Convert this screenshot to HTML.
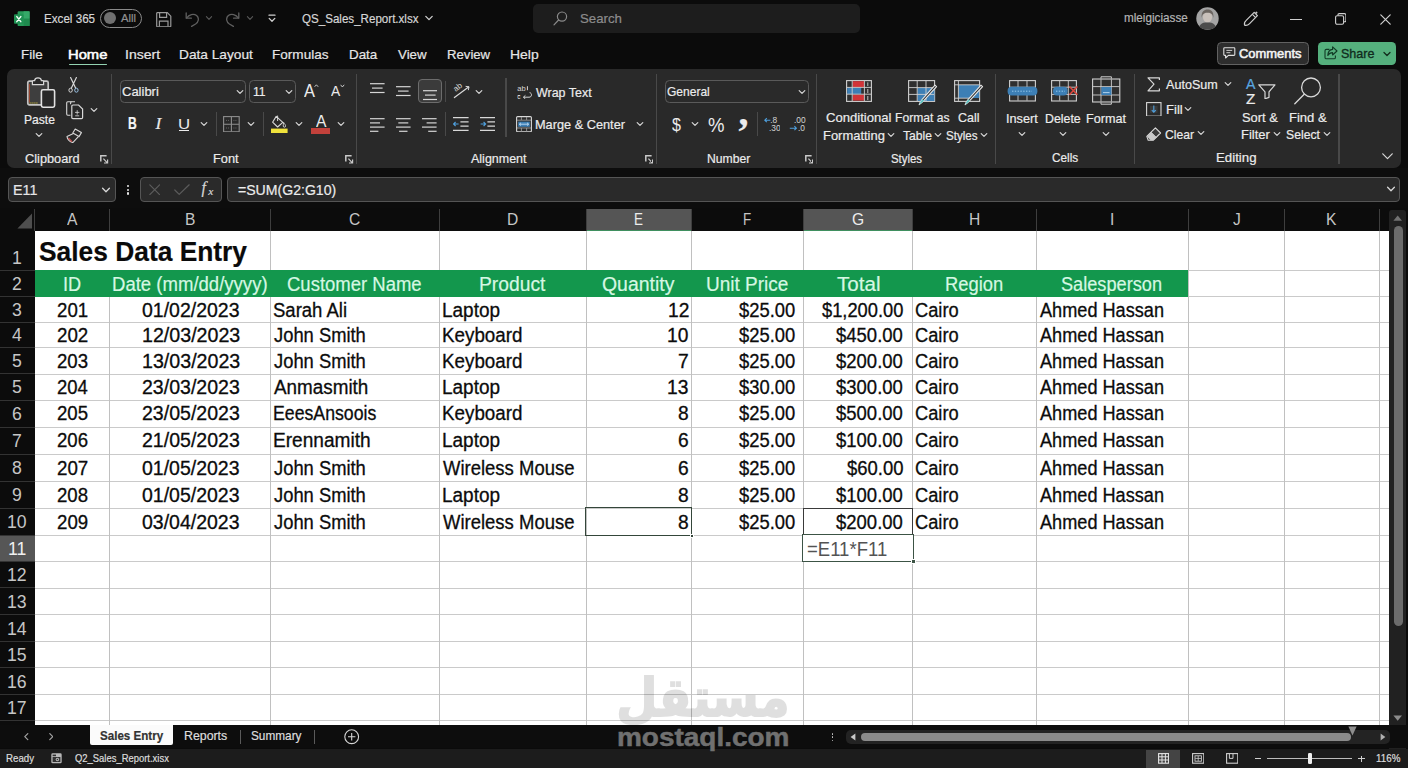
<!DOCTYPE html>
<html lang="en"><head><meta charset="utf-8"><title>QS_Sales_Report.xlsx - Excel</title>
<style>
html,body{margin:0;padding:0;}
body{width:1408px;height:768px;overflow:hidden;background:#0b0b0b;position:relative;font-family:"Liberation Sans",sans-serif;}
.r{position:absolute;box-sizing:border-box;display:block;}
.t{position:absolute;white-space:pre;line-height:1;display:block;font-family:"Liberation Sans",sans-serif;-webkit-text-stroke:0.2px currentColor;}
.ar{font-family:"DejaVu Sans","Liberation Sans",sans-serif;}
</style></head><body>
<div class="r" style="left:0px;top:0px;width:1408px;height:70px;background:#0b0b0b;"></div>
<svg class="r" style="left:14px;top:10.8px;" width="16" height="15.6" viewBox="0 0 16 15.6" fill="none"><rect x="3.6" y="0.3" width="12" height="15" rx="1.2" fill="#279a59"/><rect x="9.6" y="0.3" width="6" height="7.4" fill="#35a868"/><rect x="9.6" y="7.7" width="6" height="7.6" fill="#1f8a4e"/><rect x="0" y="3.2" width="9.6" height="9.6" rx="1" fill="#1f9153"/><path d="M2.8 5.6 L6.8 10.6 M6.8 5.6 L2.8 10.6" stroke="#f4fff8" stroke-width="1.5" stroke-linecap="round"/></svg>
<span class="t" style="left:44.17px;top:11.96px;font-size:13.4px;color:#d6d6d6;transform:scaleX(0.8686);transform-origin:left center;">Excel 365</span>
<div class="r" style="left:100.3px;top:9px;width:41.9px;height:18.5px;background:transparent;border:1px solid #8a8a8a;border-radius:10px;"></div>
<div class="r" style="left:104px;top:12.3px;width:12px;height:12px;background:#707070;border-radius:50%;"></div>
<span class="t" style="left:121.40px;top:13.03px;font-size:10.6px;color:#909090;transform:scaleX(1.0590);transform-origin:left center;">Alll</span>
<svg class="r" style="left:156px;top:11.5px;" width="15.5" height="15.5" viewBox="0 0 15.5 15.5" fill="none"><path d="M1.2 0.7 H11.3 L14.8 4.2 V14 Q14.8 14.8 14 14.8 H1.5 Q0.7 14.8 0.7 14 V1.2 Q0.7 0.7 1.2 0.7 Z" stroke="#9a9a9a" stroke-width="1.2"/><path d="M3.6 0.9 V5.4 H10.6 V0.9" stroke="#9a9a9a" stroke-width="1.2"/><path d="M3.4 14.6 V9.2 H12 V14.6" stroke="#9a9a9a" stroke-width="1.2"/></svg>
<svg class="r" style="left:185px;top:12px;" width="15" height="15" viewBox="0 0 15 15" fill="none"><path d="M1.2 1 V6.2 H6.4" stroke="#5f5f5f" stroke-width="1.3" stroke-linecap="round" stroke-linejoin="round"/><path d="M1.6 6 C4 2.5 8.6 1.2 11.6 3.6 C14.6 6.2 13.4 10 10.6 12 L6.6 14.4" stroke="#5f5f5f" stroke-width="1.3" stroke-linecap="round"/></svg>
<svg class="r" style="left:203.4px;top:14px;" width="12" height="8" viewBox="0 0 12 8" fill="none"><path d="M3.4 2.7 L6 5.3 L8.6 2.7" stroke="#5a5a5a" stroke-width="1.1" stroke-linecap="round" stroke-linejoin="round"/></svg>
<svg class="r" style="left:225px;top:12px;" width="15" height="15" viewBox="0 0 15 15" fill="none"><path d="M13.8 1 V6.2 H8.6" stroke="#5f5f5f" stroke-width="1.3" stroke-linecap="round" stroke-linejoin="round"/><path d="M13.4 6 C11 2.5 6.4 1.2 3.4 3.6 C0.4 6.2 1.6 10 4.4 12 L8.4 14.4" stroke="#5f5f5f" stroke-width="1.3" stroke-linecap="round"/></svg>
<svg class="r" style="left:243.5px;top:14px;" width="12" height="8" viewBox="0 0 12 8" fill="none"><path d="M3.4 2.7 L6 5.3 L8.6 2.7" stroke="#5a5a5a" stroke-width="1.1" stroke-linecap="round" stroke-linejoin="round"/></svg>
<svg class="r" style="left:268px;top:14px;" width="8" height="9" viewBox="0 0 8 9" fill="none"><path d="M1 1.2 H7" stroke="#d0d0d0" stroke-width="1.3" stroke-linecap="round"/><path d="M1.2 4.4 L4 7.2 L6.8 4.4" stroke="#d0d0d0" stroke-width="1.3" stroke-linecap="round" stroke-linejoin="round"/></svg>
<span class="t" style="left:302.18px;top:12.13px;font-size:13.2px;color:#d6d6d6;transform:scaleX(0.8783);transform-origin:left center;">QS_Sales_Report.xlsx</span>
<svg class="r" style="left:423px;top:14.3px;" width="12" height="8" viewBox="0 0 12 8" fill="none"><path d="M2.8 2.4 L6 5.6 L9.2 2.4" stroke="#d0d0d0" stroke-width="1.3" stroke-linecap="round" stroke-linejoin="round"/></svg>
<div class="r" style="left:533px;top:4px;width:327px;height:28.5px;background:#1d1d1d;border-radius:5px;"></div>
<svg class="r" style="left:553px;top:11px;" width="15" height="15" viewBox="0 0 15 15" fill="none"><circle cx="9" cy="5.6" r="4.6" stroke="#8a8a8a" stroke-width="1.2"/><path d="M5.6 9 L1 13.8" stroke="#8a8a8a" stroke-width="1.2" stroke-linecap="round"/></svg>
<span class="t" style="left:579.90px;top:12.03px;font-size:13.2px;color:#8c8c8c;transform:scaleX(1.0043);transform-origin:left center;">Search</span>
<span class="t" style="left:1123.84px;top:11.93px;font-size:12.6px;color:#b4b4b4;transform:scaleX(0.9298);transform-origin:left center;">mleigiciasse</span>
<svg class="r" style="left:1195.5px;top:6.5px;" width="23" height="23" viewBox="0 0 23 23" fill="none"><circle cx="11.5" cy="11.5" r="11.2" fill="#a4a4a4"/><ellipse cx="11.5" cy="10" rx="4.6" ry="5.6" fill="#c9c1bb"/><path d="M5.6 11 C5 4 9 2.4 11.5 2.6 C14.4 2.4 18 4 17.4 11 C17 8 15.6 5.6 11.5 5.8 C7.6 5.6 6 8 5.6 11 Z" fill="#6b6560"/><path d="M3.2 19.6 C5 15.4 8.4 15 11.5 15.6 C14.6 15 18 15.4 19.8 19.6 C17.6 22 14.6 22.6 11.5 22.6 C8.4 22.6 5.4 22 3.2 19.6 Z" fill="#4c4c4c"/></svg>
<svg class="r" style="left:1243px;top:11px;" width="16" height="16" viewBox="0 0 16 16" fill="none"><path d="M11.2 1.4 L14.4 4.6 L6.6 12.6 C5.4 13.8 3 14.6 1.6 14.2 C1.2 12.8 2 10.4 3.2 9.4 Z" stroke="#cfcfcf" stroke-width="1.2" stroke-linejoin="round"/><path d="M9.4 3.4 L12.4 6.4" stroke="#cfcfcf" stroke-width="1.1"/><path d="M13.4 0.6 v2.2 M12.3 1.7 h2.2" stroke="#cfcfcf" stroke-width="0.9"/></svg>
<div class="r" style="left:1290px;top:18.6px;width:11.5px;height:1.2px;background:#cfcfcf;"></div>
<svg class="r" style="left:1334.6px;top:13px;" width="11.6" height="12" viewBox="0 0 11.6 12" fill="none"><rect x="0.6" y="2.8" width="8" height="8.4" rx="1.5" stroke="#cfcfcf" stroke-width="1.1"/><path d="M3 2.4 V1.8 Q3 0.6 4.2 0.6 H9.4 Q10.9 0.6 10.9 2.1 V7.6 Q10.9 8.8 9.7 8.8 H9" stroke="#cfcfcf" stroke-width="1.1"/></svg>
<svg class="r" style="left:1379.6px;top:13.6px;" width="11" height="11" viewBox="0 0 11 11" fill="none"><path d="M0.8 0.8 L10.2 10.2 M10.2 0.8 L0.8 10.2" stroke="#cfcfcf" stroke-width="1.2" stroke-linecap="round"/></svg>
<span class="t" style="left:20.72px;top:47.59px;font-size:13.6px;color:#e6e6e6;transform:scaleX(0.9903);transform-origin:left center;">File</span>
<span class="t" style="left:67.82px;top:47.59px;font-size:13.6px;color:#ffffff;transform:scaleX(1.0856);transform-origin:left center;-webkit-text-stroke:0.55px #fff;">Home</span>
<span class="t" style="left:124.84px;top:47.59px;font-size:13.6px;color:#e6e6e6;transform:scaleX(1.0334);transform-origin:left center;">Insert</span>
<span class="t" style="left:179.20px;top:47.59px;font-size:13.6px;color:#e6e6e6;transform:scaleX(1.0077);transform-origin:left center;">Data Layout</span>
<span class="t" style="left:272.31px;top:47.59px;font-size:13.6px;color:#e6e6e6;transform:scaleX(0.9973);transform-origin:left center;">Formulas</span>
<span class="t" style="left:348.93px;top:47.59px;font-size:13.6px;color:#e6e6e6;transform:scaleX(0.9852);transform-origin:left center;">Data</span>
<span class="t" style="left:397.73px;top:47.59px;font-size:13.6px;color:#e6e6e6;transform:scaleX(0.9804);transform-origin:left center;">View</span>
<span class="t" style="left:446.95px;top:47.59px;font-size:13.6px;color:#e6e6e6;transform:scaleX(0.9674);transform-origin:left center;">Review</span>
<span class="t" style="left:510.08px;top:47.59px;font-size:13.6px;color:#e6e6e6;transform:scaleX(1.0260);transform-origin:left center;">Help</span>
<div class="r" style="left:69px;top:63.7px;width:37.6px;height:1.5px;background:#93d2b1;border-radius:1px;"></div>
<div class="r" style="left:1216.6px;top:42.4px;width:92.6px;height:22.4px;background:#2d2d2d;border:1px solid #626262;border-radius:4.5px;"></div>
<svg class="r" style="left:1223px;top:47px;" width="13" height="12" viewBox="0 0 13 12" fill="none"><path d="M1.6 0.8 H11 Q11.8 0.8 11.8 1.6 V7.6 Q11.8 8.4 11 8.4 H5.4 L2.6 11 V8.4 H1.6 Q0.8 8.4 0.8 7.6 V1.6 Q0.8 0.8 1.6 0.8 Z" stroke="#e0e0e0" stroke-width="1.1" stroke-linejoin="round"/><path d="M3.4 3.4 H9.2 M3.4 5.7 H7.4" stroke="#e0e0e0" stroke-width="0.9"/></svg>
<span class="t" style="left:1239.35px;top:47.16px;font-size:13.4px;color:#f4f4f4;transform:scaleX(0.9662);transform-origin:left center;-webkit-text-stroke:0.55px #f4f4f4;">Comments</span>
<div class="r" style="left:1318.1px;top:42.2px;width:78.2px;height:22.6px;background:#55b07d;border-radius:4.5px;"></div>
<svg class="r" style="left:1324px;top:46px;" width="14" height="14" viewBox="0 0 14 14" fill="none"><path d="M5.4 3.4 H2.4 Q1 3.4 1 4.8 V11.4 Q1 12.8 2.4 12.8 H10 Q11.4 12.8 11.4 11.4 V9.6" stroke="#113a25" stroke-width="1.1"/><path d="M8.6 0.9 L13 5 L8.6 9 V6.6 C6.6 6.6 5 7.2 3.8 9.4 C4 6 5.6 3.6 8.6 3.4 Z" stroke="#113a25" stroke-width="1.1" stroke-linejoin="round"/></svg>
<span class="t" style="left:1341.24px;top:46.99px;font-size:13.6px;color:#122c1d;transform:scaleX(0.9223);transform-origin:left center;-webkit-text-stroke:0.35px #0d2a1b;">Share</span>
<svg class="r" style="left:1380.7px;top:49.9px;" width="12" height="8" viewBox="0 0 12 8" fill="none"><path d="M3 2.5 L6 5.5 L9 2.5" stroke="#122c1d" stroke-width="1.3" stroke-linecap="round" stroke-linejoin="round"/></svg>
<div class="r" style="left:7.3px;top:69px;width:1393.4px;height:99px;background:#292929;border-radius:7px;"></div>
<svg class="r" style="left:26px;top:77px;" width="30" height="32" viewBox="0 0 30 32" fill="none"><rect x="1.8" y="4.2" width="20.4" height="23.6" rx="1.6" fill="#3e3e3e" stroke="#c4c4c4" stroke-width="1.7"/><path d="M6.4 7.6 V4.6 Q6.4 3.6 7.4 3.6 H8.6 C9 0 15 0 15.4 3.6 H16.6 Q17.6 3.6 17.6 4.6 V7.6 Z" stroke="#d6d6d6" stroke-width="1.2" fill="#292929"/><path d="M3.6 26 H12" stroke="#e8d53a" stroke-width="1.2" stroke-dasharray="1 1"/><path d="M3.4 7 V25.4" stroke="#a0452c" stroke-width="1" /><rect x="15.4" y="12.8" width="13.2" height="17.4" rx="1.6" fill="#292929" stroke="#e2e2e2" stroke-width="1.6"/></svg>
<span class="t" style="left:23.83px;top:112.73px;font-size:13.2px;color:#ececec;transform:scaleX(0.9166);transform-origin:left center;">Paste</span>
<svg class="r" style="left:32.9px;top:131px;" width="12" height="8" viewBox="0 0 12 8" fill="none"><path d="M3.2 2.6 L6 5.4 L8.8 2.6" stroke="#d8d8d8" stroke-width="1.2" stroke-linecap="round" stroke-linejoin="round"/></svg>
<svg class="r" style="left:68.4px;top:77px;" width="11" height="16.4" viewBox="0 0 11 16.4" fill="none"><path d="M2.6 0.6 L7.6 11 M8.4 0.6 L3.4 11" stroke="#d8d8d8" stroke-width="1.2" stroke-linecap="round"/><ellipse cx="2.6" cy="13.2" rx="1.7" ry="2" stroke="#d8d8d8" stroke-width="1"/><ellipse cx="8.4" cy="13.2" rx="1.7" ry="2" stroke="#9cc3e6" stroke-width="1"/></svg>
<svg class="r" style="left:65.5px;top:101px;" width="18" height="18.5" viewBox="0 0 18 18.5" fill="none"><path d="M4.6 3.2 V1.8 Q4.6 0.7 5.7 0.7 H9 " stroke="#d8d8d8" stroke-width="1.1"/><path d="M4.4 14.2 H1.8 Q0.7 14.2 0.7 13.1 V1.8 Q0.7 0.7 1.8 0.7 H5.6" stroke="#d8d8d8" stroke-width="1.1"/><path d="M7 4 H12.6 L16.6 8 V16.4 Q16.6 17.6 15.4 17.6 H7 Q5.8 17.6 5.8 16.4 V5.2 Q5.8 4 7 4 Z" stroke="#d8d8d8" stroke-width="1.2" fill="#292929"/><path d="M9 11.4 H13.4 M11.2 9.2 V13.6 M9.2 14.8 H13.2" stroke="#d8d8d8" stroke-width="0.8"/></svg>
<svg class="r" style="left:87.8px;top:106.4px;" width="12" height="8" viewBox="0 0 12 8" fill="none"><path d="M3.2 2.6 L6 5.4 L8.8 2.6" stroke="#d8d8d8" stroke-width="1.2" stroke-linecap="round" stroke-linejoin="round"/></svg>
<svg class="r" style="left:66px;top:127.5px;" width="17" height="15.5" viewBox="0 0 17 15.5" fill="none"><path d="M9.2 1 L15.4 4.6 L13 8.6 L6.8 5 Z" stroke="#d8d8d8" stroke-width="1.1" stroke-linejoin="round"/><path d="M7.4 5.6 L1 8.6 C1.4 11 3.6 13.6 6.8 14.6 L12.4 8.6" stroke="#d8d8d8" stroke-width="1.1" stroke-linejoin="round"/><path d="M2.4 10 L6 13.8" stroke="#c0504d" stroke-width="1.4"/></svg>
<span class="t" style="left:24.96px;top:151.63px;font-size:13.2px;color:#ececec;transform:scaleX(0.9677);transform-origin:left center;">Clipboard</span>
<svg class="r" style="left:100px;top:154.6px;" width="8.6" height="9.2" viewBox="0 0 8.6 9.2" fill="none"><path d="M0.8 6.6 V0.8 H6.6" stroke="#c9c9c9" stroke-width="1.5"/><path d="M3.4 3.6 L7.4 7.8 M7.6 4.4 V8 H4" stroke="#c9c9c9" stroke-width="1.2"/></svg>
<div class="r" style="left:111.0px;top:74px;width:1.4px;height:89.5px;background:#494949;"></div>
<div class="r" style="left:119.5px;top:79.6px;width:126px;height:23.2px;background:#2a2a2a;border:1.2px solid #5a5a5a;border-radius:4.5px;"></div>
<span class="t" style="left:122.05px;top:84.89px;font-size:13.6px;color:#ececec;transform:scaleX(0.9560);transform-origin:left center;">Calibri</span>
<svg class="r" style="left:233.6px;top:88px;" width="12" height="8" viewBox="0 0 12 8" fill="none"><path d="M3.2 2.6 L6 5.4 L8.8 2.6" stroke="#d8d8d8" stroke-width="1.2" stroke-linecap="round" stroke-linejoin="round"/></svg>
<div class="r" style="left:249.2px;top:79.6px;width:46.6px;height:23.2px;background:#2a2a2a;border:1.2px solid #5a5a5a;border-radius:4.5px;"></div>
<span class="t" style="left:252.89px;top:84.69px;font-size:13.6px;color:#ececec;transform:scaleX(0.8920);transform-origin:left center;">11</span>
<svg class="r" style="left:283.4px;top:88px;" width="12" height="8" viewBox="0 0 12 8" fill="none"><path d="M3.2 2.6 L6 5.4 L8.8 2.6" stroke="#d8d8d8" stroke-width="1.2" stroke-linecap="round" stroke-linejoin="round"/></svg>
<span class="t" style="left:304.10px;top:80.82px;font-size:19px;color:#ececec;transform:scaleX(0.8627);transform-origin:left center;-webkit-text-stroke:0;">A</span>
<svg class="r" style="left:314.4px;top:84.4px;" width="5" height="5" viewBox="0 0 5 5" fill="none"><path d="M0.6 2.8 L2.4 0.8 L4.2 2.8" stroke="#d8d8d8" stroke-width="0.9"/></svg>
<span class="t" style="left:330.80px;top:84.46px;font-size:14.7px;color:#ececec;transform:scaleX(0.9411);transform-origin:left center;-webkit-text-stroke:0;">A</span>
<svg class="r" style="left:339.9px;top:84px;" width="5" height="5" viewBox="0 0 5 5" fill="none"><path d="M0.6 0.8 L2.4 3 L4.2 0.8" stroke="#d8d8d8" stroke-width="0.9"/></svg>
<span class="t" style="left:127.91px;top:115.66px;font-size:16px;color:#f6f6f6;font-weight:700;transform:scaleX(0.7582);transform-origin:left center;">B</span>
<span class="t" style="left:155.4px;top:114.6px;font-size:17.4px;color:#e8e8e8;font-family:'Liberation Serif',serif;font-style:italic;">I</span>
<span class="t" style="left:177.94px;top:115.96px;font-size:15.4px;color:#ececec;transform:scaleX(1.0936);transform-origin:left center;-webkit-text-stroke:0;">U</span>
<div class="r" style="left:179px;top:130.4px;width:10px;height:1.1px;background:#ececec;"></div>
<svg class="r" style="left:197.8px;top:120.4px;" width="12" height="8" viewBox="0 0 12 8" fill="none"><path d="M3.2 2.6 L6 5.4 L8.8 2.6" stroke="#d8d8d8" stroke-width="1.2" stroke-linecap="round" stroke-linejoin="round"/></svg>
<div class="r" style="left:215.9px;top:112.4px;width:1.4px;height:23.599999999999994px;background:#494949;"></div>
<svg class="r" style="left:223px;top:116px;" width="17" height="16.4" viewBox="0 0 17 16.4" fill="none"><rect x="0.6" y="0.6" width="15.6" height="15.2" stroke="#8e8e8e" stroke-width="1.1"/><path d="M8.4 1 V15.6 M1 8.2 H16" stroke="#8e8e8e" stroke-width="1.1"/><path d="M3 4.4 h3.4 M10.4 4.4 h3.4 M3 12 h3.4 M10.4 12 h3.4" stroke="#6a6a6a" stroke-width="0.9" stroke-dasharray="1 1"/></svg>
<svg class="r" style="left:245.3px;top:120.4px;" width="12" height="8" viewBox="0 0 12 8" fill="none"><path d="M3.2 2.6 L6 5.4 L8.8 2.6" stroke="#d8d8d8" stroke-width="1.2" stroke-linecap="round" stroke-linejoin="round"/></svg>
<div class="r" style="left:262.7px;top:112.4px;width:1.4px;height:23.599999999999994px;background:#494949;"></div>
<svg class="r" style="left:271px;top:115px;" width="17" height="18.4" viewBox="0 0 17 18.4" fill="none"><path d="M5.2 1.4 L11.8 7.4 L6.6 12 L1.6 7.2 Z" stroke="#d8d8d8" stroke-width="1.1" stroke-linejoin="round"/><path d="M6.6 0.6 V6" stroke="#d8d8d8" stroke-width="1"/><path d="M12.6 7.4 C13.6 9 14.6 10 14.6 11 C14.6 12.6 12.2 12.6 12.2 11 C12.2 10 12.6 9 12.6 7.4 Z" stroke="#d8d8d8" stroke-width="0.9"/><rect x="0" y="13.6" width="16.6" height="4.5" fill="#efe23c"/></svg>
<svg class="r" style="left:292.6px;top:120.4px;" width="12" height="8" viewBox="0 0 12 8" fill="none"><path d="M3.2 2.6 L6 5.4 L8.8 2.6" stroke="#d8d8d8" stroke-width="1.2" stroke-linecap="round" stroke-linejoin="round"/></svg>
<span class="t" style="left:315.90px;top:113.31px;font-size:17px;color:#ececec;transform:scaleX(0.9199);transform-origin:left center;-webkit-text-stroke:0;">A</span>
<div class="r" style="left:311.4px;top:128.2px;width:18.2px;height:6px;background:#c2413b;"></div>
<svg class="r" style="left:334.6px;top:120.4px;" width="12" height="8" viewBox="0 0 12 8" fill="none"><path d="M3.2 2.6 L6 5.4 L8.8 2.6" stroke="#d8d8d8" stroke-width="1.2" stroke-linecap="round" stroke-linejoin="round"/></svg>
<span class="t" style="left:212.78px;top:151.63px;font-size:13.2px;color:#ececec;transform:scaleX(0.9692);transform-origin:left center;">Font</span>
<svg class="r" style="left:345.2px;top:154.6px;" width="8.6" height="9.2" viewBox="0 0 8.6 9.2" fill="none"><path d="M0.8 6.6 V0.8 H6.6" stroke="#c9c9c9" stroke-width="1.5"/><path d="M3.4 3.6 L7.4 7.8 M7.6 4.4 V8 H4" stroke="#c9c9c9" stroke-width="1.2"/></svg>
<div class="r" style="left:355.6px;top:74px;width:1.4px;height:89.5px;background:#494949;"></div>
<svg class="r" style="left:370px;top:83px;" width="14.6" height="14.200000000000001" viewBox="0 0 14.6 14.200000000000001" fill="none"><path d="M0.0 0.7 h14.6" stroke="#d6d6d6" stroke-width="1.2"/><path d="M2.0 5.1 h10.6" stroke="#d6d6d6" stroke-width="1.2"/><path d="M0.0 9.5 h14.6" stroke="#d6d6d6" stroke-width="1.2"/></svg>
<svg class="r" style="left:396px;top:85.6px;" width="14.6" height="14.200000000000001" viewBox="0 0 14.6 14.200000000000001" fill="none"><path d="M0.0 0.7 h14.6" stroke="#d6d6d6" stroke-width="1.2"/><path d="M2.0 5.1 h10.6" stroke="#d6d6d6" stroke-width="1.2"/><path d="M0.0 9.5 h14.6" stroke="#d6d6d6" stroke-width="1.2"/></svg>
<div class="r" style="left:417.8px;top:79.2px;width:23.8px;height:24.2px;background:#3b3b3b;border:1px solid #6c6c6c;border-radius:4px;"></div>
<svg class="r" style="left:422.6px;top:90.2px;" width="14.6" height="14.200000000000001" viewBox="0 0 14.6 14.200000000000001" fill="none"><path d="M0.0 0.7 h14.6" stroke="#d6d6d6" stroke-width="1.2"/><path d="M2.0 5.1 h10.6" stroke="#d6d6d6" stroke-width="1.2"/><path d="M0.0 9.5 h14.6" stroke="#d6d6d6" stroke-width="1.2"/></svg>
<div class="r" style="left:444.7px;top:80.5px;width:1.4px;height:21.700000000000003px;background:#494949;"></div>
<svg class="r" style="left:453px;top:83px;" width="17.4" height="16" viewBox="0 0 17.4 16" fill="none"><path d="M1.4 14.6 L15.6 4" stroke="#d8d8d8" stroke-width="1.2" stroke-linecap="round"/><path d="M13 3.4 L16 3.8 L15.4 6.8" stroke="#d8d8d8" stroke-width="1" stroke-linecap="round"/><text x="1.2" y="7.6" font-size="8" fill="#d8d8d8" font-family="Liberation Sans,sans-serif" transform="rotate(-38 4 6)">ab</text></svg>
<svg class="r" style="left:472.6px;top:88px;" width="12" height="8" viewBox="0 0 12 8" fill="none"><path d="M3.2 2.6 L6 5.4 L8.8 2.6" stroke="#d8d8d8" stroke-width="1.2" stroke-linecap="round" stroke-linejoin="round"/></svg>
<div class="r" style="left:505.3px;top:78px;width:1.4px;height:58.69999999999999px;background:#494949;"></div>
<svg class="r" style="left:517px;top:84.6px;" width="15" height="14.4" viewBox="0 0 15 14.4" fill="none"><text x="0.2" y="6.4" font-size="7.6" fill="#d8d8d8" font-family="Liberation Sans,sans-serif">ab</text><path d="M10.4 1.2 V5.2" stroke="#d8d8d8" stroke-width="1"/><path d="M0.8 10.6 H3 M12.6 7.6 C15.4 8 15 12.4 12 12.2 H6.6" stroke="#d8d8d8" stroke-width="1"/><path d="M8.4 10.4 L6.4 12.2 L8.4 14" stroke="#d8d8d8" stroke-width="1"/><text x="0.2" y="13.6" font-size="6.6" fill="#d8d8d8" font-family="Liberation Sans,sans-serif">c</text></svg>
<span class="t" style="left:536.04px;top:85.93px;font-size:13.2px;color:#ececec;transform:scaleX(0.9448);transform-origin:left center;">Wrap Text</span>
<svg class="r" style="left:370px;top:117.6px;" width="14.6" height="17.8" viewBox="0 0 14.6 17.8" fill="none"><path d="M0.0 0.7 h14.6" stroke="#d6d6d6" stroke-width="1.2"/><path d="M0.0 4.9 h10" stroke="#d6d6d6" stroke-width="1.2"/><path d="M0.0 9.1 h14.6" stroke="#d6d6d6" stroke-width="1.2"/><path d="M0.0 13.3 h8.4" stroke="#d6d6d6" stroke-width="1.2"/></svg>
<svg class="r" style="left:396px;top:117.6px;" width="14.6" height="17.8" viewBox="0 0 14.6 17.8" fill="none"><path d="M0.0 0.7 h14.6" stroke="#d6d6d6" stroke-width="1.2"/><path d="M2.3 4.9 h10" stroke="#d6d6d6" stroke-width="1.2"/><path d="M0.0 9.1 h14.6" stroke="#d6d6d6" stroke-width="1.2"/><path d="M3.1 13.3 h8.4" stroke="#d6d6d6" stroke-width="1.2"/></svg>
<svg class="r" style="left:422.4px;top:117.6px;" width="14.6" height="17.8" viewBox="0 0 14.6 17.8" fill="none"><path d="M0.0 0.7 h14.6" stroke="#d6d6d6" stroke-width="1.2"/><path d="M4.6 4.9 h10" stroke="#d6d6d6" stroke-width="1.2"/><path d="M0.0 9.1 h14.6" stroke="#d6d6d6" stroke-width="1.2"/><path d="M6.2 13.3 h8.4" stroke="#d6d6d6" stroke-width="1.2"/></svg>
<div class="r" style="left:444.7px;top:112.4px;width:1.4px;height:23.599999999999994px;background:#494949;"></div>
<svg class="r" style="left:453.4px;top:117.4px;" width="15.6" height="14" viewBox="0 0 15.6 14" fill="none"><path d="M0 0.7 H15.6 M7.4 4.9 H15.6 M7.4 9.1 H15.6 M0 13.3 H15.6" stroke="#d8d8d8" stroke-width="1.2"/><path d="M5.6 7 H0.6 M2.6 5 L0.6 7 L2.6 9" stroke="#4f9fdc" stroke-width="1.1"/></svg>
<svg class="r" style="left:479.8px;top:117.4px;" width="15.6" height="14" viewBox="0 0 15.6 14" fill="none"><path d="M0 0.7 H15.6 M7.4 4.9 H15.6 M7.4 9.1 H15.6 M0 13.3 H15.6" stroke="#d8d8d8" stroke-width="1.2"/><path d="M0.6 7 H5.6 M3.6 5 L5.6 7 L3.6 9" stroke="#4f9fdc" stroke-width="1.1"/></svg>
<svg class="r" style="left:515.6px;top:116px;" width="16" height="16.4" viewBox="0 0 16 16.4" fill="none"><rect x="0.6" y="0.6" width="14.8" height="15.2" rx="1" stroke="#d8d8d8" stroke-width="1.1"/><path d="M1 4.2 H15 M1 12 H15 M5.4 1 V4 M10.6 1 V4 M5.4 12 V15.6 M10.6 12 V15.6" stroke="#9c9c9c" stroke-width="0.9"/><rect x="2.2" y="5.6" width="11.6" height="5.2" fill="#3d7fb5"/><path d="M3.4 8.2 H12.6 M5 6.8 L3.4 8.2 L5 9.6 M11 6.8 L12.6 8.2 L11 9.6" stroke="#cfe6f7" stroke-width="0.8"/></svg>
<span class="t" style="left:535.08px;top:117.83px;font-size:13.2px;color:#ececec;transform:scaleX(0.9666);transform-origin:left center;">Marge &amp; Center</span>
<svg class="r" style="left:634.2px;top:120.4px;" width="12" height="8" viewBox="0 0 12 8" fill="none"><path d="M3.2 2.6 L6 5.4 L8.8 2.6" stroke="#d8d8d8" stroke-width="1.2" stroke-linecap="round" stroke-linejoin="round"/></svg>
<span class="t" style="left:470.90px;top:151.63px;font-size:13.2px;color:#ececec;transform:scaleX(0.9470);transform-origin:left center;">Alignment</span>
<svg class="r" style="left:644.8px;top:154.6px;" width="8.6" height="9.2" viewBox="0 0 8.6 9.2" fill="none"><path d="M0.8 6.6 V0.8 H6.6" stroke="#c9c9c9" stroke-width="1.5"/><path d="M3.4 3.6 L7.4 7.8 M7.6 4.4 V8 H4" stroke="#c9c9c9" stroke-width="1.2"/></svg>
<div class="r" style="left:655.5999999999999px;top:74px;width:1.4px;height:89.5px;background:#494949;"></div>
<div class="r" style="left:665.2px;top:79.6px;width:143.4px;height:23.2px;background:#2a2a2a;border:1.2px solid #5a5a5a;border-radius:4.5px;"></div>
<span class="t" style="left:667.30px;top:84.89px;font-size:13.6px;color:#ececec;transform:scaleX(0.8849);transform-origin:left center;">General</span>
<svg class="r" style="left:795.6px;top:88px;" width="12" height="8" viewBox="0 0 12 8" fill="none"><path d="M3.2 2.6 L6 5.4 L8.8 2.6" stroke="#d8d8d8" stroke-width="1.2" stroke-linecap="round" stroke-linejoin="round"/></svg>
<span class="t" style="left:671.54px;top:115.32px;font-size:19px;color:#ececec;transform:scaleX(0.8441);transform-origin:left center;-webkit-text-stroke:0;">$</span>
<svg class="r" style="left:688.7px;top:120.4px;" width="12" height="8" viewBox="0 0 12 8" fill="none"><path d="M3.2 2.6 L6 5.4 L8.8 2.6" stroke="#d8d8d8" stroke-width="1.2" stroke-linecap="round" stroke-linejoin="round"/></svg>
<span class="t" style="left:708.45px;top:114.73px;font-size:20.4px;color:#ececec;transform:scaleX(0.9087);transform-origin:left center;-webkit-text-stroke:0;">%</span>
<span class="t" style="left:738.6px;top:91.8px;font-size:40px;font-weight:700;color:#ececec;font-family:'Liberation Serif',serif;">,</span>
<div class="r" style="left:756.6999999999999px;top:112.4px;width:1.4px;height:23.599999999999994px;background:#494949;"></div>
<svg class="r" style="left:763.6px;top:116.4px;" width="16.4" height="16" viewBox="0 0 16.4 16" fill="none"><text x="6.2" y="7" font-size="8.4" fill="#d4d4d4" font-family="Liberation Sans,sans-serif">.8</text><text x="5" y="15.4" font-size="8.4" fill="#d4d4d4" font-family="Liberation Sans,sans-serif">.30</text><path d="M6.4 4.2 H0.8 M2.8 2.2 L0.8 4.2 L2.8 6.2" stroke="#4f9fdc" stroke-width="1.1"/></svg>
<svg class="r" style="left:789.2px;top:116.4px;" width="16.4" height="16" viewBox="0 0 16.4 16" fill="none"><text x="5" y="7" font-size="8.4" fill="#d4d4d4" font-family="Liberation Sans,sans-serif">.00</text><text x="9" y="15.4" font-size="8.4" fill="#d4d4d4" font-family="Liberation Sans,sans-serif">.0</text><path d="M0.8 12.2 H7.4 M5.4 10.2 L7.4 12.2 L5.4 14.2" stroke="#4f9fdc" stroke-width="1.1"/></svg>
<span class="t" style="left:706.52px;top:151.63px;font-size:13.2px;color:#ececec;transform:scaleX(0.9240);transform-origin:left center;">Number</span>
<svg class="r" style="left:804.7px;top:154.6px;" width="8.6" height="9.2" viewBox="0 0 8.6 9.2" fill="none"><path d="M0.8 6.6 V0.8 H6.6" stroke="#c9c9c9" stroke-width="1.5"/><path d="M3.4 3.6 L7.4 7.8 M7.6 4.4 V8 H4" stroke="#c9c9c9" stroke-width="1.2"/></svg>
<div class="r" style="left:815.5px;top:74px;width:1.4px;height:89.5px;background:#494949;"></div>
<svg class="r" style="left:846.4px;top:80.4px;" width="26" height="22" viewBox="0 0 26 22" fill="none"><rect x="0.6" y="0.6" width="24.8" height="20.8" stroke="#d0d0d0" stroke-width="1.1" fill="#2f2f2f"/><rect x="6.6" y="1.2" width="11.4" height="6" fill="#d13438"/><rect x="1.2" y="7.6" width="14" height="6.4" fill="#3d7fb5"/><rect x="6.6" y="14.6" width="11.4" height="6" fill="#d13438"/><path d="M6.2 1 V21 M18.4 1 V21 M1 7.4 H25 M1 14.2 H25" stroke="#d0d0d0" stroke-width="0.9"/><path d="M21.8 2.4 V6 M21.8 9 V13 M21.8 16 V20" stroke="#d0d0d0" stroke-width="0.9"/></svg>
<span class="t" style="left:825.75px;top:111.43px;font-size:13.2px;color:#ececec;transform:scaleX(0.9910);transform-origin:left center;">Conditional</span>
<span class="t" style="left:822.86px;top:128.63px;font-size:13.2px;color:#ececec;transform:scaleX(0.9823);transform-origin:left center;">Formatting</span>
<svg class="r" style="left:885.1px;top:131px;" width="12" height="8" viewBox="0 0 12 8" fill="none"><path d="M3.2 2.6 L6 5.4 L8.8 2.6" stroke="#d8d8d8" stroke-width="1.2" stroke-linecap="round" stroke-linejoin="round"/></svg>
<svg class="r" style="left:907.6px;top:80.4px;" width="30.4" height="26" viewBox="0 0 30.4 26" fill="none"><rect x="0.6" y="0.6" width="26" height="20.8" stroke="#d0d0d0" stroke-width="1.1" fill="#2f2f2f"/><rect x="9.4" y="8" width="17" height="13" fill="#3d7fb5"/><path d="M9.2 1 V21 M18 1 V21 M1 7.6 H26 M1 14.4 H26" stroke="#d0d0d0" stroke-width="0.9"/><path d="M28.6 6.6 L16 20.4 C14.6 22 13 23.4 11.2 24.6 C12 22.6 13 21 14.4 19.2 L27 5.2 Z" fill="#2f2f2f" stroke="#e6e6e6" stroke-width="1.1" stroke-linejoin="round"/><path d="M11.2 24.6 C12 22.6 13 21 14.4 19.2 L16 20.4 C14.6 22 13 23.4 11.2 24.6 Z" fill="#59c3c3"/></svg>
<span class="t" style="left:895.03px;top:111.43px;font-size:13.2px;color:#ececec;transform:scaleX(0.9191);transform-origin:left center;">Format as</span>
<span class="t" style="left:902.86px;top:128.63px;font-size:13.2px;color:#ececec;transform:scaleX(0.9189);transform-origin:left center;">Table</span>
<svg class="r" style="left:931.7px;top:131px;" width="12" height="8" viewBox="0 0 12 8" fill="none"><path d="M3.2 2.6 L6 5.4 L8.8 2.6" stroke="#d8d8d8" stroke-width="1.2" stroke-linecap="round" stroke-linejoin="round"/></svg>
<svg class="r" style="left:953.6px;top:80.4px;" width="30.4" height="26" viewBox="0 0 30.4 26" fill="none"><rect x="0.6" y="0.6" width="25" height="20.8" stroke="#d0d0d0" stroke-width="1.1" fill="#2f2f2f"/><rect x="4.6" y="5" width="20.6" height="13" fill="#3d7fb5"/><path d="M4.4 1 V21 M1 4.8 H25.4 M1 18.2 H18" stroke="#d0d0d0" stroke-width="0.9"/><path d="M28.6 6.6 L16 20.4 C14.6 22 13 23.4 11.2 24.6 C12 22.6 13 21 14.4 19.2 L27 5.2 Z" fill="#2f2f2f" stroke="#e6e6e6" stroke-width="1.1" stroke-linejoin="round"/><path d="M11.2 24.6 C12 22.6 13 21 14.4 19.2 L16 20.4 C14.6 22 13 23.4 11.2 24.6 Z" fill="#59c3c3"/></svg>
<span class="t" style="left:957.98px;top:111.43px;font-size:13.2px;color:#ececec;transform:scaleX(0.9440);transform-origin:left center;">Call</span>
<span class="t" style="left:946.08px;top:128.63px;font-size:13.2px;color:#ececec;transform:scaleX(0.8793);transform-origin:left center;">Styles</span>
<svg class="r" style="left:978.2px;top:131px;" width="12" height="8" viewBox="0 0 12 8" fill="none"><path d="M3.2 2.6 L6 5.4 L8.8 2.6" stroke="#d8d8d8" stroke-width="1.2" stroke-linecap="round" stroke-linejoin="round"/></svg>
<span class="t" style="left:891.09px;top:151.63px;font-size:13.2px;color:#ececec;transform:scaleX(0.8650);transform-origin:left center;">Styles</span>
<div class="r" style="left:995.0999999999999px;top:74px;width:1.4px;height:89.5px;background:#494949;"></div>
<svg class="r" style="left:1009px;top:80.4px;overflow:visible;" width="27" height="21.6" viewBox="0 0 27 21.6" fill="none"><rect x="0.6" y="0.6" width="25.8" height="20.400000000000002" stroke="#d0d0d0" stroke-width="1.1" fill="#2f2f2f"/><path d="M9.0 1 V20.6 M18.0 1 V20.6 M1 7.2 H26 M1 14.4 H26" stroke="#d0d0d0" stroke-width="0.9"/><rect x="-1.4" y="6.8" width="29.8" height="8.6" rx="4" fill="#3d7fb5"/><path d="M3 11.2 h20" stroke="#9fd0f0" stroke-width="0.9" stroke-dasharray="1.4 1.4"/></svg>
<span class="t" style="left:1005.75px;top:111.63px;font-size:13.2px;color:#ececec;transform:scaleX(0.9639);transform-origin:left center;">Insert</span>
<svg class="r" style="left:1015.8px;top:130.4px;" width="12" height="8" viewBox="0 0 12 8" fill="none"><path d="M3.2 2.6 L6 5.4 L8.8 2.6" stroke="#d8d8d8" stroke-width="1.2" stroke-linecap="round" stroke-linejoin="round"/></svg>
<svg class="r" style="left:1051px;top:80.4px;overflow:visible;" width="26" height="21.6" viewBox="0 0 26 21.6" fill="none"><rect x="0.6" y="0.6" width="24.8" height="20.400000000000002" stroke="#d0d0d0" stroke-width="1.1" fill="#2f2f2f"/><path d="M8.7 1 V20.6 M17.3 1 V20.6 M1 7.2 H25 M1 14.4 H25" stroke="#d0d0d0" stroke-width="0.9"/><rect x="2" y="6.8" width="14.6" height="8.6" rx="4" fill="#3d7fb5"/><path d="M5 11.2 h9" stroke="#9fd0f0" stroke-width="0.9" stroke-dasharray="1.4 1.4"/><path d="M18.4 6.6 L26.4 14.8 M26.4 6.6 L18.4 14.8" stroke="#e0483e" stroke-width="1.5"/></svg>
<span class="t" style="left:1045.41px;top:111.63px;font-size:13.2px;color:#ececec;transform:scaleX(0.9370);transform-origin:left center;">Delete</span>
<svg class="r" style="left:1057.3px;top:130.4px;" width="12" height="8" viewBox="0 0 12 8" fill="none"><path d="M3.2 2.6 L6 5.4 L8.8 2.6" stroke="#d8d8d8" stroke-width="1.2" stroke-linecap="round" stroke-linejoin="round"/></svg>
<svg class="r" style="left:1092.4px;top:76px;" width="28.4" height="29" viewBox="0 0 28.4 29" fill="none"><path d="M9 2.6 V0.8 H19.4 V2.6" stroke="#d0d0d0" stroke-width="1"/><path d="M9 26.4 V28.2 H19.4 V26.4" stroke="#d0d0d0" stroke-width="1"/><rect x="0.6" y="3" width="27.2" height="23" stroke="#d0d0d0" stroke-width="1.1" fill="#2f2f2f"/><path d="M9 3.4 V25.6 M19.4 3.4 V25.6 M1 10.6 H27.4 M1 19 H27.4" stroke="#d0d0d0" stroke-width="0.9"/><rect x="9.4" y="11" width="10" height="8" fill="#3d7fb5"/><path d="M11 16.6 h6.6" stroke="#cfe6f7" stroke-width="0.8"/></svg>
<span class="t" style="left:1086.09px;top:111.63px;font-size:13.2px;color:#ececec;transform:scaleX(0.9568);transform-origin:left center;">Format</span>
<svg class="r" style="left:1100.4px;top:130.4px;" width="12" height="8" viewBox="0 0 12 8" fill="none"><path d="M3.2 2.6 L6 5.4 L8.8 2.6" stroke="#d8d8d8" stroke-width="1.2" stroke-linecap="round" stroke-linejoin="round"/></svg>
<span class="t" style="left:1051.81px;top:151.43px;font-size:13.2px;color:#ececec;transform:scaleX(0.8921);transform-origin:left center;">Cells</span>
<div class="r" style="left:1133.8999999999999px;top:74px;width:1.4px;height:89.5px;background:#494949;"></div>
<svg class="r" style="left:1147.4px;top:77px;" width="13.4" height="14.6" viewBox="0 0 13.4 14.6" fill="none"><path d="M12.4 3 V0.8 H1 L7 7.2 L1 13.8 H12.4 V11.6" stroke="#d8d8d8" stroke-width="1.2" stroke-linejoin="round"/></svg>
<span class="t" style="left:1166.10px;top:77.93px;font-size:13.2px;color:#ececec;transform:scaleX(0.9540);transform-origin:left center;">AutoSum</span>
<svg class="r" style="left:1222.1px;top:80.3px;" width="12" height="8" viewBox="0 0 12 8" fill="none"><path d="M3.2 2.6 L6 5.4 L8.8 2.6" stroke="#d8d8d8" stroke-width="1.2" stroke-linecap="round" stroke-linejoin="round"/></svg>
<svg class="r" style="left:1146px;top:101.6px;" width="15.6" height="14.8" viewBox="0 0 15.6 14.8" fill="none"><rect x="0.6" y="0.6" width="14.4" height="13.6" stroke="#d8d8d8" stroke-width="1.1"/><rect x="4" y="4" width="7.6" height="6.8" fill="#3a3a3a"/><path d="M7.8 3.6 V10 M5.8 8.2 L7.8 10.2 L9.8 8.2" stroke="#4f9fdc" stroke-width="1.1"/></svg>
<span class="t" style="left:1165.65px;top:102.83px;font-size:13.2px;color:#ececec;transform:scaleX(0.9922);transform-origin:left center;">Fill</span>
<svg class="r" style="left:1182.3px;top:105px;" width="12" height="8" viewBox="0 0 12 8" fill="none"><path d="M3.2 2.6 L6 5.4 L8.8 2.6" stroke="#d8d8d8" stroke-width="1.2" stroke-linecap="round" stroke-linejoin="round"/></svg>
<svg class="r" style="left:1146.4px;top:126.6px;" width="15.4" height="14.4" viewBox="0 0 15.4 14.4" fill="none"><path d="M9.4 0.8 L14.6 6 L7.4 13.2 L2.2 13.2 L0.8 9.4 Z" stroke="#d8d8d8" stroke-width="1.1" stroke-linejoin="round" fill="#3a3a3a"/><path d="M5 5.2 L10.2 10.4" stroke="#d8d8d8" stroke-width="1"/><path d="M1 9.6 L4.6 13.2 L7.4 13.2 L10.2 10.4 L5 5.2 Z" fill="#c9c9c9"/></svg>
<span class="t" style="left:1165.49px;top:127.53px;font-size:13.2px;color:#ececec;transform:scaleX(0.9208);transform-origin:left center;">Clear</span>
<svg class="r" style="left:1194.8px;top:129.3px;" width="12" height="8" viewBox="0 0 12 8" fill="none"><path d="M3.2 2.6 L6 5.4 L8.8 2.6" stroke="#d8d8d8" stroke-width="1.2" stroke-linecap="round" stroke-linejoin="round"/></svg>
<span class="t" style="left:1246.00px;top:77.01px;font-size:14.4px;color:#5aa7e0;transform:scaleX(0.9816);transform-origin:left center;">A</span>
<span class="t" style="left:1246.14px;top:91.75px;font-size:14px;color:#ececec;transform:scaleX(1.0909);transform-origin:left center;">Z</span>
<svg class="r" style="left:1258px;top:83.6px;" width="18" height="15.6" viewBox="0 0 18 15.6" fill="none"><path d="M0.8 0.8 H17 L11 7.8 V13.4 L7 14.8 V7.8 Z" stroke="#d8d8d8" stroke-width="1.2" stroke-linejoin="round"/></svg>
<span class="t" style="left:1242.42px;top:111.23px;font-size:13.2px;color:#ececec;transform:scaleX(0.9766);transform-origin:left center;">Sort &amp;</span>
<span class="t" style="left:1241.36px;top:128.13px;font-size:13.2px;color:#ececec;transform:scaleX(0.9840);transform-origin:left center;">Filter</span>
<svg class="r" style="left:1270.5px;top:130.4px;" width="12" height="8" viewBox="0 0 12 8" fill="none"><path d="M3.2 2.6 L6 5.4 L8.8 2.6" stroke="#d8d8d8" stroke-width="1.2" stroke-linecap="round" stroke-linejoin="round"/></svg>
<svg class="r" style="left:1294px;top:77px;" width="28" height="28" viewBox="0 0 28 28" fill="none"><circle cx="17" cy="10.4" r="9.4" stroke="#d8d8d8" stroke-width="1.3"/><path d="M10.2 17.2 L0.8 26.8" stroke="#d8d8d8" stroke-width="1.3" stroke-linecap="round"/></svg>
<span class="t" style="left:1289.46px;top:111.23px;font-size:13.2px;color:#ececec;transform:scaleX(0.9893);transform-origin:left center;">Find &amp;</span>
<span class="t" style="left:1286.35px;top:128.13px;font-size:13.2px;color:#ececec;transform:scaleX(0.9258);transform-origin:left center;">Select</span>
<svg class="r" style="left:1321px;top:130.4px;" width="12" height="8" viewBox="0 0 12 8" fill="none"><path d="M3.2 2.6 L6 5.4 L8.8 2.6" stroke="#d8d8d8" stroke-width="1.2" stroke-linecap="round" stroke-linejoin="round"/></svg>
<span class="t" style="left:1216.04px;top:151.43px;font-size:13.2px;color:#ececec;transform:scaleX(1.0049);transform-origin:left center;">Editing</span>
<div class="r" style="left:1338.3px;top:74px;width:1.4px;height:89.5px;background:#494949;"></div>
<svg class="r" style="left:1381.6px;top:153px;" width="11" height="7" viewBox="0 0 11 7" fill="none"><path d="M0.8 0.8 L5.5 5.6 L10.2 0.8" stroke="#d8d8d8" stroke-width="1.2" stroke-linecap="round" stroke-linejoin="round"/></svg>
<div class="r" style="left:0px;top:168px;width:1408px;height:40.5px;background:#0d0d0d;"></div>
<div class="r" style="left:8px;top:177px;width:108px;height:25px;background:#2a2a2a;border:1px solid #555;border-radius:4px;"></div>
<span class="t" style="left:13.46px;top:182.54px;font-size:14.6px;color:#e6e6e6;transform:scaleX(0.9797);transform-origin:left center;">E11</span>
<svg class="r" style="left:99.6px;top:185.6px;" width="12" height="8" viewBox="0 0 12 8" fill="none"><path d="M2.6 2.3 L6 5.7 L9.4 2.3" stroke="#d8d8d8" stroke-width="1.3" stroke-linecap="round" stroke-linejoin="round"/></svg>
<div class="r" style="left:126.6px;top:185.0px;width:2.2px;height:2.2px;background:#e8e8e8;border-radius:50%;"></div>
<div class="r" style="left:126.6px;top:188.7px;width:2.2px;height:2.2px;background:#e8e8e8;border-radius:50%;"></div>
<div class="r" style="left:126.6px;top:192.4px;width:2.2px;height:2.2px;background:#e8e8e8;border-radius:50%;"></div>
<div class="r" style="left:140px;top:177px;width:82px;height:25px;background:#2a2a2a;border:1px solid #555;border-radius:4px;"></div>
<svg class="r" style="left:148.6px;top:184px;" width="11.4" height="11.4" viewBox="0 0 11.4 11.4" fill="none"><path d="M0.8 0.8 L10.6 10.6 M10.6 0.8 L0.8 10.6" stroke="#5c5c5c" stroke-width="1.2" stroke-linecap="round"/></svg>
<svg class="r" style="left:173.6px;top:184px;" width="16" height="11.4" viewBox="0 0 16 11.4" fill="none"><path d="M0.8 6 L5.2 10.4 L15.2 0.8" stroke="#5c5c5c" stroke-width="1.2" stroke-linecap="round" stroke-linejoin="round"/></svg>
<span class="t" style="left:201.6px;top:180.4px;font-size:16px;color:#d6d6d6;font-family:'Liberation Serif',serif;font-style:italic;">f</span>
<span class="t" style="left:208.2px;top:185.6px;font-size:11.4px;color:#d6d6d6;font-family:'Liberation Serif',serif;font-style:italic;">x</span>
<div class="r" style="left:227.2px;top:177px;width:1173px;height:25px;background:#2a2a2a;border:1px solid #555;border-radius:4px;"></div>
<span class="t" style="left:238.40px;top:182.03px;font-size:15.2px;color:#ececec;transform:scaleX(0.9274);transform-origin:left center;">=SUM(G2:G10)</span>
<svg class="r" style="left:1385.4px;top:185.4px;" width="12" height="8" viewBox="0 0 12 8" fill="none"><path d="M2.6 2.3 L6 5.7 L9.4 2.3" stroke="#d8d8d8" stroke-width="1.3" stroke-linecap="round" stroke-linejoin="round"/></svg>
<div class="r" style="left:34.5px;top:230.9px;width:1354.5px;height:494.3px;background:#ffffff;"></div>
<div class="r" style="left:0px;top:208px;width:1408px;height:23px;background:#0c0c0c;"></div>
<div class="r" style="left:586.2px;top:209.4px;width:105.1px;height:21.6px;background:#555555;"></div>
<div class="r" style="left:803.1px;top:209.4px;width:109.8px;height:21.6px;background:#555555;"></div>
<div class="r" style="left:586.2px;top:230px;width:105.1px;height:1.2px;background:#3f8f5f;"></div>
<div class="r" style="left:803.1px;top:230px;width:109.8px;height:1.2px;background:#3f8f5f;"></div>
<span class="t" style="left:66.81px;top:212.28px;font-size:16.8px;color:#c6c6c6;transform:scaleX(0.9300);transform-origin:left center;-webkit-text-stroke:0;">A</span>
<span class="t" style="left:184.52px;top:212.28px;font-size:16.8px;color:#c6c6c6;transform:scaleX(0.9300);transform-origin:left center;-webkit-text-stroke:0;">B</span>
<span class="t" style="left:349.11px;top:212.28px;font-size:16.8px;color:#c6c6c6;transform:scaleX(0.9300);transform-origin:left center;-webkit-text-stroke:0;">C</span>
<span class="t" style="left:506.85px;top:212.28px;font-size:16.8px;color:#c6c6c6;transform:scaleX(0.9300);transform-origin:left center;-webkit-text-stroke:0;">D</span>
<span class="t" style="left:634.01px;top:212.28px;font-size:16.8px;color:#ededed;transform:scaleX(0.8000);transform-origin:left center;-webkit-text-stroke:0;">E</span>
<span class="t" style="left:742.83px;top:212.28px;font-size:16.8px;color:#c6c6c6;transform:scaleX(0.8000);transform-origin:left center;-webkit-text-stroke:0;">F</span>
<span class="t" style="left:852.10px;top:212.28px;font-size:16.8px;color:#ededed;transform:scaleX(0.9300);transform-origin:left center;-webkit-text-stroke:0;">G</span>
<span class="t" style="left:969.03px;top:212.28px;font-size:16.8px;color:#c6c6c6;transform:scaleX(0.9300);transform-origin:left center;-webkit-text-stroke:0;">H</span>
<span class="t" style="left:1110.20px;top:212.28px;font-size:16.8px;color:#c6c6c6;transform:scaleX(0.9300);transform-origin:left center;-webkit-text-stroke:0;">I</span>
<span class="t" style="left:1232.91px;top:212.28px;font-size:16.8px;color:#c6c6c6;transform:scaleX(0.9300);transform-origin:left center;-webkit-text-stroke:0;">J</span>
<span class="t" style="left:1326.36px;top:212.28px;font-size:16.8px;color:#c6c6c6;transform:scaleX(0.9300);transform-origin:left center;-webkit-text-stroke:0;">K</span>
<div class="r" style="left:34.0px;top:209.2px;width:1px;height:21.8px;background:#3e3e3e;"></div>
<div class="r" style="left:109.0px;top:209.2px;width:1px;height:21.8px;background:#3e3e3e;"></div>
<div class="r" style="left:269.9px;top:209.2px;width:1px;height:21.8px;background:#3e3e3e;"></div>
<div class="r" style="left:438.8px;top:209.2px;width:1px;height:21.8px;background:#3e3e3e;"></div>
<div class="r" style="left:585.7px;top:209.2px;width:1px;height:21.8px;background:#3e3e3e;"></div>
<div class="r" style="left:690.8px;top:209.2px;width:1px;height:21.8px;background:#3e3e3e;"></div>
<div class="r" style="left:802.6px;top:209.2px;width:1px;height:21.8px;background:#3e3e3e;"></div>
<div class="r" style="left:912.4px;top:209.2px;width:1px;height:21.8px;background:#3e3e3e;"></div>
<div class="r" style="left:1035.9px;top:209.2px;width:1px;height:21.8px;background:#3e3e3e;"></div>
<div class="r" style="left:1187.8px;top:209.2px;width:1px;height:21.8px;background:#3e3e3e;"></div>
<div class="r" style="left:1283.9px;top:209.2px;width:1px;height:21.8px;background:#3e3e3e;"></div>
<div class="r" style="left:1379.3px;top:209.2px;width:1px;height:21.8px;background:#3e3e3e;"></div>
<svg class="r" style="left:16.5px;top:212.5px;" width="15.6" height="16" viewBox="0 0 15.6 16" fill="none"><path d="M15.2 0.4 V15.6 H0.4 Z" fill="#4e4e4e"/></svg>
<div class="r" style="left:0px;top:230.9px;width:34.5px;height:494.3px;background:#0c0c0c;"></div>
<div class="r" style="left:0px;top:535.4px;width:34.5px;height:26.3px;background:#565656;"></div>
<span class="t" style="left:12.03px;top:247.55px;font-size:19.2px;color:#c6c6c6;transform:scaleX(0.9200);transform-origin:left center;-webkit-text-stroke:0;">1</span>
<div class="r" style="left:0px;top:269.7px;width:34.5px;height:1.1px;background:#333333;"></div>
<span class="t" style="left:12.30px;top:274.15px;font-size:19.2px;color:#c6c6c6;transform:scaleX(0.9200);transform-origin:left center;-webkit-text-stroke:0;">2</span>
<div class="r" style="left:0px;top:296.0px;width:34.5px;height:1.1px;background:#333333;"></div>
<span class="t" style="left:12.30px;top:300.35px;font-size:19.2px;color:#c6c6c6;transform:scaleX(0.9200);transform-origin:left center;-webkit-text-stroke:0;">3</span>
<div class="r" style="left:0px;top:321.59999999999997px;width:34.5px;height:1.1px;background:#333333;"></div>
<span class="t" style="left:12.39px;top:325.35px;font-size:19.2px;color:#c6c6c6;transform:scaleX(0.9200);transform-origin:left center;-webkit-text-stroke:0;">4</span>
<div class="r" style="left:0px;top:347.29999999999995px;width:34.5px;height:1.1px;background:#333333;"></div>
<span class="t" style="left:12.30px;top:351.35px;font-size:19.2px;color:#c6c6c6;transform:scaleX(0.9200);transform-origin:left center;-webkit-text-stroke:0;">5</span>
<div class="r" style="left:0px;top:373.4px;width:34.5px;height:1.1px;background:#333333;"></div>
<span class="t" style="left:12.30px;top:377.35px;font-size:19.2px;color:#c6c6c6;transform:scaleX(0.9200);transform-origin:left center;-webkit-text-stroke:0;">5</span>
<div class="r" style="left:0px;top:400.09999999999997px;width:34.5px;height:1.1px;background:#333333;"></div>
<span class="t" style="left:12.21px;top:403.85px;font-size:19.2px;color:#c6c6c6;transform:scaleX(0.9200);transform-origin:left center;-webkit-text-stroke:0;">6</span>
<div class="r" style="left:0px;top:426.79999999999995px;width:34.5px;height:1.1px;background:#333333;"></div>
<span class="t" style="left:12.30px;top:431.05px;font-size:19.2px;color:#c6c6c6;transform:scaleX(0.9200);transform-origin:left center;-webkit-text-stroke:0;">7</span>
<div class="r" style="left:0px;top:453.79999999999995px;width:34.5px;height:1.1px;background:#333333;"></div>
<span class="t" style="left:12.25px;top:458.35px;font-size:19.2px;color:#c6c6c6;transform:scaleX(0.9200);transform-origin:left center;-webkit-text-stroke:0;">8</span>
<div class="r" style="left:0px;top:480.79999999999995px;width:34.5px;height:1.1px;background:#333333;"></div>
<span class="t" style="left:12.30px;top:485.25px;font-size:19.2px;color:#c6c6c6;transform:scaleX(0.9200);transform-origin:left center;-webkit-text-stroke:0;">9</span>
<div class="r" style="left:0px;top:507.59999999999997px;width:34.5px;height:1.1px;background:#333333;"></div>
<span class="t" style="left:7.04px;top:512.25px;font-size:19.2px;color:#c6c6c6;transform:scaleX(0.9200);transform-origin:left center;-webkit-text-stroke:0;">10</span>
<div class="r" style="left:0px;top:534.8px;width:34.5px;height:1.1px;background:#333333;"></div>
<span class="t" style="left:7.79px;top:539.15px;font-size:19.2px;color:#f0f0f0;transform:scaleX(0.9200);transform-origin:left center;-webkit-text-stroke:0;">11</span>
<div class="r" style="left:0px;top:561.1px;width:34.5px;height:1.1px;background:#333333;"></div>
<span class="t" style="left:7.18px;top:565.45px;font-size:19.2px;color:#c6c6c6;transform:scaleX(0.9200);transform-origin:left center;-webkit-text-stroke:0;">12</span>
<div class="r" style="left:0px;top:587.4px;width:34.5px;height:1.1px;background:#333333;"></div>
<span class="t" style="left:7.09px;top:592.15px;font-size:19.2px;color:#c6c6c6;transform:scaleX(0.9200);transform-origin:left center;-webkit-text-stroke:0;">13</span>
<div class="r" style="left:0px;top:614.1px;width:34.5px;height:1.1px;background:#333333;"></div>
<span class="t" style="left:7.00px;top:618.95px;font-size:19.2px;color:#c6c6c6;transform:scaleX(0.9200);transform-origin:left center;-webkit-text-stroke:0;">14</span>
<div class="r" style="left:0px;top:640.8px;width:34.5px;height:1.1px;background:#333333;"></div>
<span class="t" style="left:7.09px;top:645.25px;font-size:19.2px;color:#c6c6c6;transform:scaleX(0.9200);transform-origin:left center;-webkit-text-stroke:0;">15</span>
<div class="r" style="left:0px;top:667.1px;width:34.5px;height:1.1px;background:#333333;"></div>
<span class="t" style="left:7.09px;top:671.65px;font-size:19.2px;color:#c6c6c6;transform:scaleX(0.9200);transform-origin:left center;-webkit-text-stroke:0;">16</span>
<div class="r" style="left:0px;top:693.5px;width:34.5px;height:1.1px;background:#333333;"></div>
<span class="t" style="left:7.18px;top:698.05px;font-size:19.2px;color:#c6c6c6;transform:scaleX(0.9200);transform-origin:left center;-webkit-text-stroke:0;">17</span>
<div class="r" style="left:0px;top:719.9px;width:34.5px;height:1.1px;background:#333333;"></div>
<div class="r" style="left:34.5px;top:270.1px;width:1154.2px;height:26.6px;background:#13974d;"></div>
<div class="r" style="left:34.5px;top:322px;width:1354.5px;height:1px;background:#cacaca;"></div>
<div class="r" style="left:34.5px;top:347px;width:1354.5px;height:1px;background:#cacaca;"></div>
<div class="r" style="left:34.5px;top:374px;width:1354.5px;height:1px;background:#cacaca;"></div>
<div class="r" style="left:34.5px;top:400px;width:1354.5px;height:1px;background:#cacaca;"></div>
<div class="r" style="left:34.5px;top:427px;width:1354.5px;height:1px;background:#cacaca;"></div>
<div class="r" style="left:34.5px;top:454px;width:1354.5px;height:1px;background:#cacaca;"></div>
<div class="r" style="left:34.5px;top:481px;width:1354.5px;height:1px;background:#cacaca;"></div>
<div class="r" style="left:34.5px;top:508px;width:1354.5px;height:1px;background:#cacaca;"></div>
<div class="r" style="left:34.5px;top:535px;width:1354.5px;height:1px;background:#cacaca;"></div>
<div class="r" style="left:34.5px;top:561px;width:1354.5px;height:1px;background:#cacaca;"></div>
<div class="r" style="left:34.5px;top:588px;width:1354.5px;height:1px;background:#cacaca;"></div>
<div class="r" style="left:34.5px;top:614px;width:1354.5px;height:1px;background:#cacaca;"></div>
<div class="r" style="left:34.5px;top:641px;width:1354.5px;height:1px;background:#cacaca;"></div>
<div class="r" style="left:34.5px;top:667px;width:1354.5px;height:1px;background:#cacaca;"></div>
<div class="r" style="left:34.5px;top:694px;width:1354.5px;height:1px;background:#cacaca;"></div>
<div class="r" style="left:34.5px;top:720px;width:1354.5px;height:1px;background:#cacaca;"></div>
<div class="r" style="left:1188.3px;top:269.7px;width:200.7px;height:1.2px;background:#cacaca;"></div>
<div class="r" style="left:1188.3px;top:296.0px;width:200.7px;height:1.2px;background:#cacaca;"></div>
<div class="r" style="left:108.95px;top:296.6px;width:1.1px;height:428.6px;background:#c0c0c0;"></div>
<div class="r" style="left:269.84999999999997px;top:230.9px;width:1.1px;height:39.4px;background:#c0c0c0;"></div>
<div class="r" style="left:269.84999999999997px;top:296.6px;width:1.1px;height:428.6px;background:#c0c0c0;"></div>
<div class="r" style="left:438.75px;top:230.9px;width:1.1px;height:39.4px;background:#c0c0c0;"></div>
<div class="r" style="left:438.75px;top:296.6px;width:1.1px;height:428.6px;background:#c0c0c0;"></div>
<div class="r" style="left:585.6500000000001px;top:230.9px;width:1.1px;height:39.4px;background:#c0c0c0;"></div>
<div class="r" style="left:585.6500000000001px;top:296.6px;width:1.1px;height:428.6px;background:#c0c0c0;"></div>
<div class="r" style="left:690.75px;top:230.9px;width:1.1px;height:39.4px;background:#c0c0c0;"></div>
<div class="r" style="left:690.75px;top:296.6px;width:1.1px;height:428.6px;background:#c0c0c0;"></div>
<div class="r" style="left:802.5500000000001px;top:230.9px;width:1.1px;height:39.4px;background:#c0c0c0;"></div>
<div class="r" style="left:802.5500000000001px;top:296.6px;width:1.1px;height:428.6px;background:#c0c0c0;"></div>
<div class="r" style="left:912.35px;top:230.9px;width:1.1px;height:39.4px;background:#c0c0c0;"></div>
<div class="r" style="left:912.35px;top:296.6px;width:1.1px;height:428.6px;background:#c0c0c0;"></div>
<div class="r" style="left:1035.8500000000001px;top:230.9px;width:1.1px;height:39.4px;background:#c0c0c0;"></div>
<div class="r" style="left:1035.8500000000001px;top:296.6px;width:1.1px;height:428.6px;background:#c0c0c0;"></div>
<div class="r" style="left:1187.75px;top:230.9px;width:1.1px;height:39.4px;background:#c0c0c0;"></div>
<div class="r" style="left:1187.75px;top:296.6px;width:1.1px;height:428.6px;background:#c0c0c0;"></div>
<div class="r" style="left:1187.75px;top:270.3px;width:1.1px;height:26.3px;background:#c0c0c0;"></div>
<div class="r" style="left:1283.8500000000001px;top:230.9px;width:1.1px;height:39.4px;background:#c0c0c0;"></div>
<div class="r" style="left:1283.8500000000001px;top:296.6px;width:1.1px;height:428.6px;background:#c0c0c0;"></div>
<div class="r" style="left:1283.8500000000001px;top:270.3px;width:1.1px;height:26.3px;background:#c0c0c0;"></div>
<div class="r" style="left:1379.25px;top:230.9px;width:1.1px;height:39.4px;background:#c0c0c0;"></div>
<div class="r" style="left:1379.25px;top:296.6px;width:1.1px;height:428.6px;background:#c0c0c0;"></div>
<div class="r" style="left:1379.25px;top:270.3px;width:1.1px;height:26.3px;background:#c0c0c0;"></div>
<span class="t" style="left:38.61px;top:238.10px;font-size:28px;color:#0a0a0a;font-weight:700;transform:scaleX(0.9412);transform-origin:left center;">Sales Data Entry</span>
<span class="t" style="left:62.77px;top:273.77px;font-size:20px;color:#d6f7e3;transform:scaleX(0.9075);transform-origin:left center;">ID</span>
<span class="t" style="left:112.02px;top:273.77px;font-size:20px;color:#d6f7e3;transform:scaleX(0.9272);transform-origin:left center;">Date (mm/dd/yyyy)</span>
<span class="t" style="left:286.78px;top:273.77px;font-size:20px;color:#d6f7e3;transform:scaleX(0.9248);transform-origin:left center;">Customer Name</span>
<span class="t" style="left:479.16px;top:273.77px;font-size:20px;color:#d6f7e3;transform:scaleX(0.9628);transform-origin:left center;">Product</span>
<span class="t" style="left:601.93px;top:273.77px;font-size:20px;color:#d6f7e3;transform:scaleX(0.9715);transform-origin:left center;">Quantity</span>
<span class="t" style="left:705.57px;top:273.77px;font-size:20px;color:#d6f7e3;transform:scaleX(0.9502);transform-origin:left center;">Unit Price</span>
<span class="t" style="left:836.79px;top:273.77px;font-size:20px;color:#d6f7e3;transform:scaleX(1.0296);transform-origin:left center;">Total</span>
<span class="t" style="left:945.13px;top:273.77px;font-size:20px;color:#d6f7e3;transform:scaleX(0.9190);transform-origin:left center;">Region</span>
<span class="t" style="left:1061.18px;top:273.77px;font-size:20px;color:#d6f7e3;transform:scaleX(0.9083);transform-origin:left center;">Salesperson</span>
<span class="t" style="left:56.62px;top:299.87px;font-size:20px;color:#0c0c0c;transform:scaleX(0.9331);transform-origin:left center;-webkit-text-stroke:0.3px #0c0c0c;">201</span>
<span class="t" style="left:142.32px;top:299.87px;font-size:20px;color:#0c0c0c;transform:scaleX(0.9746);transform-origin:left center;-webkit-text-stroke:0.3px #0c0c0c;">01/02/2023</span>
<span class="t" style="left:273.37px;top:299.87px;font-size:20px;color:#0c0c0c;transform:scaleX(0.9254);transform-origin:left center;-webkit-text-stroke:0.3px #0c0c0c;">Sarah Ali</span>
<span class="t" style="left:441.98px;top:299.87px;font-size:20px;color:#0c0c0c;transform:scaleX(0.9490);transform-origin:left center;-webkit-text-stroke:0.3px #0c0c0c;">Laptop</span>
<span class="t" style="left:667.55px;top:299.87px;font-size:20px;color:#0c0c0c;transform:scaleX(0.9600);transform-origin:left center;-webkit-text-stroke:0.3px #0c0c0c;">12</span>
<span class="t" style="left:739.12px;top:299.87px;font-size:20px;color:#0c0c0c;transform:scaleX(0.9187);transform-origin:left center;-webkit-text-stroke:0.3px #0c0c0c;">$25.00</span>
<span class="t" style="left:821.82px;top:299.87px;font-size:20px;color:#0c0c0c;transform:scaleX(0.9149);transform-origin:left center;-webkit-text-stroke:0.3px #0c0c0c;">$1,200.00</span>
<span class="t" style="left:915.49px;top:299.87px;font-size:20px;color:#0c0c0c;transform:scaleX(0.9130);transform-origin:left center;-webkit-text-stroke:0.3px #0c0c0c;">Cairo</span>
<span class="t" style="left:1039.80px;top:299.87px;font-size:20px;color:#0c0c0c;transform:scaleX(0.9069);transform-origin:left center;-webkit-text-stroke:0.3px #0c0c0c;">Ahmed Hassan</span>
<span class="t" style="left:56.61px;top:324.77px;font-size:20px;color:#0c0c0c;transform:scaleX(0.9361);transform-origin:left center;-webkit-text-stroke:0.3px #0c0c0c;">202</span>
<span class="t" style="left:141.63px;top:324.77px;font-size:20px;color:#0c0c0c;transform:scaleX(0.9816);transform-origin:left center;-webkit-text-stroke:0.3px #0c0c0c;">12/03/2023</span>
<span class="t" style="left:273.92px;top:324.77px;font-size:20px;color:#0c0c0c;transform:scaleX(0.9177);transform-origin:left center;-webkit-text-stroke:0.3px #0c0c0c;">John Smith</span>
<span class="t" style="left:442.00px;top:324.77px;font-size:20px;color:#0c0c0c;transform:scaleX(0.9395);transform-origin:left center;-webkit-text-stroke:0.3px #0c0c0c;">Keyboard</span>
<span class="t" style="left:667.26px;top:324.77px;font-size:20px;color:#0c0c0c;transform:scaleX(0.9600);transform-origin:left center;-webkit-text-stroke:0.3px #0c0c0c;">10</span>
<span class="t" style="left:739.12px;top:324.77px;font-size:20px;color:#0c0c0c;transform:scaleX(0.9187);transform-origin:left center;-webkit-text-stroke:0.3px #0c0c0c;">$25.00</span>
<span class="t" style="left:836.42px;top:324.77px;font-size:20px;color:#0c0c0c;transform:scaleX(0.9244);transform-origin:left center;-webkit-text-stroke:0.3px #0c0c0c;">$450.00</span>
<span class="t" style="left:915.49px;top:324.77px;font-size:20px;color:#0c0c0c;transform:scaleX(0.9130);transform-origin:left center;-webkit-text-stroke:0.3px #0c0c0c;">Cairo</span>
<span class="t" style="left:1039.80px;top:324.77px;font-size:20px;color:#0c0c0c;transform:scaleX(0.9069);transform-origin:left center;-webkit-text-stroke:0.3px #0c0c0c;">Ahmed Hassan</span>
<span class="t" style="left:56.62px;top:350.77px;font-size:20px;color:#0c0c0c;transform:scaleX(0.9302);transform-origin:left center;-webkit-text-stroke:0.3px #0c0c0c;">203</span>
<span class="t" style="left:141.63px;top:350.77px;font-size:20px;color:#0c0c0c;transform:scaleX(0.9816);transform-origin:left center;-webkit-text-stroke:0.3px #0c0c0c;">13/03/2023</span>
<span class="t" style="left:273.92px;top:350.77px;font-size:20px;color:#0c0c0c;transform:scaleX(0.9177);transform-origin:left center;-webkit-text-stroke:0.3px #0c0c0c;">John Smith</span>
<span class="t" style="left:442.00px;top:350.77px;font-size:20px;color:#0c0c0c;transform:scaleX(0.9395);transform-origin:left center;-webkit-text-stroke:0.3px #0c0c0c;">Keyboard</span>
<span class="t" style="left:678.20px;top:350.77px;font-size:20px;color:#0c0c0c;transform:scaleX(0.9600);transform-origin:left center;-webkit-text-stroke:0.3px #0c0c0c;">7</span>
<span class="t" style="left:739.12px;top:350.77px;font-size:20px;color:#0c0c0c;transform:scaleX(0.9187);transform-origin:left center;-webkit-text-stroke:0.3px #0c0c0c;">$25.00</span>
<span class="t" style="left:836.42px;top:350.77px;font-size:20px;color:#0c0c0c;transform:scaleX(0.9244);transform-origin:left center;-webkit-text-stroke:0.3px #0c0c0c;">$200.00</span>
<span class="t" style="left:915.49px;top:350.77px;font-size:20px;color:#0c0c0c;transform:scaleX(0.9130);transform-origin:left center;-webkit-text-stroke:0.3px #0c0c0c;">Cairo</span>
<span class="t" style="left:1039.80px;top:350.77px;font-size:20px;color:#0c0c0c;transform:scaleX(0.9069);transform-origin:left center;-webkit-text-stroke:0.3px #0c0c0c;">Ahmed Hassan</span>
<span class="t" style="left:56.63px;top:376.77px;font-size:20px;color:#0c0c0c;transform:scaleX(0.9243);transform-origin:left center;-webkit-text-stroke:0.3px #0c0c0c;">204</span>
<span class="t" style="left:142.12px;top:376.77px;font-size:20px;color:#0c0c0c;transform:scaleX(0.9766);transform-origin:left center;-webkit-text-stroke:0.3px #0c0c0c;">23/03/2023</span>
<span class="t" style="left:274.20px;top:376.77px;font-size:20px;color:#0c0c0c;transform:scaleX(0.9433);transform-origin:left center;-webkit-text-stroke:0.3px #0c0c0c;">Anmasmith</span>
<span class="t" style="left:441.98px;top:376.77px;font-size:20px;color:#0c0c0c;transform:scaleX(0.9490);transform-origin:left center;-webkit-text-stroke:0.3px #0c0c0c;">Laptop</span>
<span class="t" style="left:667.36px;top:376.77px;font-size:20px;color:#0c0c0c;transform:scaleX(0.9600);transform-origin:left center;-webkit-text-stroke:0.3px #0c0c0c;">13</span>
<span class="t" style="left:739.12px;top:376.77px;font-size:20px;color:#0c0c0c;transform:scaleX(0.9187);transform-origin:left center;-webkit-text-stroke:0.3px #0c0c0c;">$30.00</span>
<span class="t" style="left:836.42px;top:376.77px;font-size:20px;color:#0c0c0c;transform:scaleX(0.9244);transform-origin:left center;-webkit-text-stroke:0.3px #0c0c0c;">$300.00</span>
<span class="t" style="left:915.49px;top:376.77px;font-size:20px;color:#0c0c0c;transform:scaleX(0.9130);transform-origin:left center;-webkit-text-stroke:0.3px #0c0c0c;">Cairo</span>
<span class="t" style="left:1039.80px;top:376.77px;font-size:20px;color:#0c0c0c;transform:scaleX(0.9069);transform-origin:left center;-webkit-text-stroke:0.3px #0c0c0c;">Ahmed Hassan</span>
<span class="t" style="left:56.62px;top:403.27px;font-size:20px;color:#0c0c0c;transform:scaleX(0.9302);transform-origin:left center;-webkit-text-stroke:0.3px #0c0c0c;">205</span>
<span class="t" style="left:142.12px;top:403.27px;font-size:20px;color:#0c0c0c;transform:scaleX(0.9766);transform-origin:left center;-webkit-text-stroke:0.3px #0c0c0c;">23/05/2023</span>
<span class="t" style="left:272.78px;top:403.27px;font-size:20px;color:#0c0c0c;transform:scaleX(0.8846);transform-origin:left center;-webkit-text-stroke:0.3px #0c0c0c;">EeesAnsoois</span>
<span class="t" style="left:442.00px;top:403.27px;font-size:20px;color:#0c0c0c;transform:scaleX(0.9395);transform-origin:left center;-webkit-text-stroke:0.3px #0c0c0c;">Keyboard</span>
<span class="t" style="left:678.01px;top:403.27px;font-size:20px;color:#0c0c0c;transform:scaleX(0.9600);transform-origin:left center;-webkit-text-stroke:0.3px #0c0c0c;">8</span>
<span class="t" style="left:739.12px;top:403.27px;font-size:20px;color:#0c0c0c;transform:scaleX(0.9187);transform-origin:left center;-webkit-text-stroke:0.3px #0c0c0c;">$25.00</span>
<span class="t" style="left:836.42px;top:403.27px;font-size:20px;color:#0c0c0c;transform:scaleX(0.9244);transform-origin:left center;-webkit-text-stroke:0.3px #0c0c0c;">$500.00</span>
<span class="t" style="left:915.49px;top:403.27px;font-size:20px;color:#0c0c0c;transform:scaleX(0.9130);transform-origin:left center;-webkit-text-stroke:0.3px #0c0c0c;">Cairo</span>
<span class="t" style="left:1039.80px;top:403.27px;font-size:20px;color:#0c0c0c;transform:scaleX(0.9069);transform-origin:left center;-webkit-text-stroke:0.3px #0c0c0c;">Ahmed Hassan</span>
<span class="t" style="left:56.62px;top:430.47px;font-size:20px;color:#0c0c0c;transform:scaleX(0.9302);transform-origin:left center;-webkit-text-stroke:0.3px #0c0c0c;">206</span>
<span class="t" style="left:142.12px;top:430.47px;font-size:20px;color:#0c0c0c;transform:scaleX(0.9766);transform-origin:left center;-webkit-text-stroke:0.3px #0c0c0c;">21/05/2023</span>
<span class="t" style="left:272.67px;top:430.47px;font-size:20px;color:#0c0c0c;transform:scaleX(0.9547);transform-origin:left center;-webkit-text-stroke:0.3px #0c0c0c;">Erennamith</span>
<span class="t" style="left:441.98px;top:430.47px;font-size:20px;color:#0c0c0c;transform:scaleX(0.9490);transform-origin:left center;-webkit-text-stroke:0.3px #0c0c0c;">Laptop</span>
<span class="t" style="left:678.01px;top:430.47px;font-size:20px;color:#0c0c0c;transform:scaleX(0.9600);transform-origin:left center;-webkit-text-stroke:0.3px #0c0c0c;">6</span>
<span class="t" style="left:739.12px;top:430.47px;font-size:20px;color:#0c0c0c;transform:scaleX(0.9187);transform-origin:left center;-webkit-text-stroke:0.3px #0c0c0c;">$25.00</span>
<span class="t" style="left:836.42px;top:430.47px;font-size:20px;color:#0c0c0c;transform:scaleX(0.9244);transform-origin:left center;-webkit-text-stroke:0.3px #0c0c0c;">$100.00</span>
<span class="t" style="left:915.49px;top:430.47px;font-size:20px;color:#0c0c0c;transform:scaleX(0.9130);transform-origin:left center;-webkit-text-stroke:0.3px #0c0c0c;">Cairo</span>
<span class="t" style="left:1039.80px;top:430.47px;font-size:20px;color:#0c0c0c;transform:scaleX(0.9069);transform-origin:left center;-webkit-text-stroke:0.3px #0c0c0c;">Ahmed Hassan</span>
<span class="t" style="left:56.61px;top:457.77px;font-size:20px;color:#0c0c0c;transform:scaleX(0.9361);transform-origin:left center;-webkit-text-stroke:0.3px #0c0c0c;">207</span>
<span class="t" style="left:142.32px;top:457.77px;font-size:20px;color:#0c0c0c;transform:scaleX(0.9746);transform-origin:left center;-webkit-text-stroke:0.3px #0c0c0c;">01/05/2023</span>
<span class="t" style="left:273.92px;top:457.77px;font-size:20px;color:#0c0c0c;transform:scaleX(0.9177);transform-origin:left center;-webkit-text-stroke:0.3px #0c0c0c;">John Smith</span>
<span class="t" style="left:443.41px;top:457.77px;font-size:20px;color:#0c0c0c;transform:scaleX(0.9242);transform-origin:left center;-webkit-text-stroke:0.3px #0c0c0c;">Wireless Mouse</span>
<span class="t" style="left:678.01px;top:457.77px;font-size:20px;color:#0c0c0c;transform:scaleX(0.9600);transform-origin:left center;-webkit-text-stroke:0.3px #0c0c0c;">6</span>
<span class="t" style="left:739.12px;top:457.77px;font-size:20px;color:#0c0c0c;transform:scaleX(0.9187);transform-origin:left center;-webkit-text-stroke:0.3px #0c0c0c;">$25.00</span>
<span class="t" style="left:846.72px;top:457.77px;font-size:20px;color:#0c0c0c;transform:scaleX(0.9237);transform-origin:left center;-webkit-text-stroke:0.3px #0c0c0c;">$60.00</span>
<span class="t" style="left:915.49px;top:457.77px;font-size:20px;color:#0c0c0c;transform:scaleX(0.9130);transform-origin:left center;-webkit-text-stroke:0.3px #0c0c0c;">Cairo</span>
<span class="t" style="left:1039.80px;top:457.77px;font-size:20px;color:#0c0c0c;transform:scaleX(0.9069);transform-origin:left center;-webkit-text-stroke:0.3px #0c0c0c;">Ahmed Hassan</span>
<span class="t" style="left:56.62px;top:484.67px;font-size:20px;color:#0c0c0c;transform:scaleX(0.9302);transform-origin:left center;-webkit-text-stroke:0.3px #0c0c0c;">208</span>
<span class="t" style="left:142.32px;top:484.67px;font-size:20px;color:#0c0c0c;transform:scaleX(0.9746);transform-origin:left center;-webkit-text-stroke:0.3px #0c0c0c;">01/05/2023</span>
<span class="t" style="left:273.92px;top:484.67px;font-size:20px;color:#0c0c0c;transform:scaleX(0.9177);transform-origin:left center;-webkit-text-stroke:0.3px #0c0c0c;">John Smith</span>
<span class="t" style="left:441.98px;top:484.67px;font-size:20px;color:#0c0c0c;transform:scaleX(0.9490);transform-origin:left center;-webkit-text-stroke:0.3px #0c0c0c;">Laptop</span>
<span class="t" style="left:678.01px;top:484.67px;font-size:20px;color:#0c0c0c;transform:scaleX(0.9600);transform-origin:left center;-webkit-text-stroke:0.3px #0c0c0c;">8</span>
<span class="t" style="left:739.12px;top:484.67px;font-size:20px;color:#0c0c0c;transform:scaleX(0.9187);transform-origin:left center;-webkit-text-stroke:0.3px #0c0c0c;">$25.00</span>
<span class="t" style="left:836.42px;top:484.67px;font-size:20px;color:#0c0c0c;transform:scaleX(0.9244);transform-origin:left center;-webkit-text-stroke:0.3px #0c0c0c;">$100.00</span>
<span class="t" style="left:915.49px;top:484.67px;font-size:20px;color:#0c0c0c;transform:scaleX(0.9130);transform-origin:left center;-webkit-text-stroke:0.3px #0c0c0c;">Cairo</span>
<span class="t" style="left:1039.80px;top:484.67px;font-size:20px;color:#0c0c0c;transform:scaleX(0.9069);transform-origin:left center;-webkit-text-stroke:0.3px #0c0c0c;">Ahmed Hassan</span>
<span class="t" style="left:56.62px;top:511.67px;font-size:20px;color:#0c0c0c;transform:scaleX(0.9331);transform-origin:left center;-webkit-text-stroke:0.3px #0c0c0c;">209</span>
<span class="t" style="left:142.32px;top:511.67px;font-size:20px;color:#0c0c0c;transform:scaleX(0.9746);transform-origin:left center;-webkit-text-stroke:0.3px #0c0c0c;">03/04/2023</span>
<span class="t" style="left:273.92px;top:511.67px;font-size:20px;color:#0c0c0c;transform:scaleX(0.9177);transform-origin:left center;-webkit-text-stroke:0.3px #0c0c0c;">John Smith</span>
<span class="t" style="left:443.41px;top:511.67px;font-size:20px;color:#0c0c0c;transform:scaleX(0.9242);transform-origin:left center;-webkit-text-stroke:0.3px #0c0c0c;">Wireless Mouse</span>
<span class="t" style="left:678.01px;top:511.67px;font-size:20px;color:#0c0c0c;transform:scaleX(0.9600);transform-origin:left center;-webkit-text-stroke:0.3px #0c0c0c;">8</span>
<span class="t" style="left:739.12px;top:511.67px;font-size:20px;color:#0c0c0c;transform:scaleX(0.9187);transform-origin:left center;-webkit-text-stroke:0.3px #0c0c0c;">$25.00</span>
<span class="t" style="left:836.42px;top:511.67px;font-size:20px;color:#0c0c0c;transform:scaleX(0.9244);transform-origin:left center;-webkit-text-stroke:0.3px #0c0c0c;">$200.00</span>
<span class="t" style="left:915.49px;top:511.67px;font-size:20px;color:#0c0c0c;transform:scaleX(0.9130);transform-origin:left center;-webkit-text-stroke:0.3px #0c0c0c;">Cairo</span>
<span class="t" style="left:1039.80px;top:511.67px;font-size:20px;color:#0c0c0c;transform:scaleX(0.9069);transform-origin:left center;-webkit-text-stroke:0.3px #0c0c0c;">Ahmed Hassan</span>
<div class="r" style="left:585.3px;top:507.3px;width:107.2px;height:29px;background:transparent;border:1.8px solid #34463a;"></div>
<div class="r" style="left:689.8px;top:533.8px;width:4.6px;height:4.6px;background:#34463a;border:1px solid #fff;"></div>
<div class="r" style="left:802.6px;top:508px;width:110.8px;height:27.5px;background:transparent;border:1px solid #3a3a3a;"></div>
<div class="r" style="left:802.4px;top:534.4px;width:111.6px;height:28px;background:#ffffff;border:1.8px solid #3c5345;"></div>
<div class="r" style="left:910.8px;top:559.2px;width:5px;height:5px;background:#3c5345;border:1px solid #fff;"></div>
<span class="t" style="left:806.57px;top:538.57px;font-size:20px;color:#535353;transform:scaleX(0.9267);transform-origin:left center;-webkit-text-stroke:0;">=E11*F11</span>
<div class="r" style="left:1389px;top:210px;width:17.3px;height:538.5px;background:#212121;border-radius:3px 3px 0 0;"></div>
<svg class="r" style="left:1393.4px;top:215px;" width="9.4" height="7" viewBox="0 0 9.4 7" fill="none"><path d="M4.7 0.6 L9 5.8 H0.4 Z" fill="#727272"/></svg>
<div class="r" style="left:1393.8px;top:226px;width:9.4px;height:399.6px;background:#6c6c6c;border-radius:4.5px;"></div>
<svg class="r" style="left:1393.4px;top:715.4px;" width="9.4" height="6.4" viewBox="0 0 9.4 6.4" fill="none"><path d="M4.7 5.8 L9 0.6 H0.4 Z" fill="#8c8c8c"/></svg>
<div class="r" style="left:0px;top:725.2px;width:1408px;height:23.3px;background:#0d0d0d;"></div>
<svg class="r" style="left:24.4px;top:733.2px;" width="4.6" height="7.4" viewBox="0 0 4.6 7.4" fill="none"><path d="M3.8 0.7 L0.8 3.7 L3.8 6.7" stroke="#a2a2a2" stroke-width="1.2" stroke-linecap="round" stroke-linejoin="round"/></svg>
<svg class="r" style="left:48.8px;top:733.2px;" width="4.6" height="7.4" viewBox="0 0 4.6 7.4" fill="none"><path d="M0.8 0.7 L3.8 3.7 L0.8 6.7" stroke="#a2a2a2" stroke-width="1.2" stroke-linecap="round" stroke-linejoin="round"/></svg>
<div class="r" style="left:90.2px;top:724.6px;width:83px;height:20.2px;background:#fbfbfb;border-radius:0 0 2px 2px;"></div>
<span class="t" style="left:99.75px;top:729.63px;font-size:12.6px;color:#333333;font-weight:700;transform:scaleX(0.9213);transform-origin:left center;">Sales Entry</span>
<span class="t" style="left:184.21px;top:729.63px;font-size:12.6px;color:#dedede;transform:scaleX(0.9800);transform-origin:left center;">Reports</span>
<div class="r" style="left:240px;top:729.6px;width:1px;height:14px;background:#5a5a5a;"></div>
<span class="t" style="left:251.47px;top:729.63px;font-size:12.6px;color:#dedede;transform:scaleX(0.9370);transform-origin:left center;">Summary</span>
<div class="r" style="left:314px;top:729.6px;width:1px;height:14px;background:#5a5a5a;"></div>
<svg class="r" style="left:344.4px;top:729.4px;" width="15.4" height="15.4" viewBox="0 0 15.4 15.4" fill="none"><circle cx="7.7" cy="7.7" r="6.9" stroke="#d6d6d6" stroke-width="1.1"/><path d="M7.7 4 V11.4 M4 7.7 H11.4" stroke="#d6d6d6" stroke-width="1.1"/></svg>
<div class="r" style="left:831.8px;top:733.0px;width:1.6px;height:1.6px;background:#c8c8c8;border-radius:50%;"></div>
<div class="r" style="left:831.8px;top:736.4px;width:1.6px;height:1.6px;background:#c8c8c8;border-radius:50%;"></div>
<div class="r" style="left:831.8px;top:739.8px;width:1.6px;height:1.6px;background:#c8c8c8;border-radius:50%;"></div>
<div class="r" style="left:845.5px;top:730.2px;width:544.5px;height:14px;background:#232323;border-radius:5px;"></div>
<svg class="r" style="left:850px;top:733.4px;" width="6" height="8" viewBox="0 0 6 8" fill="none"><path d="M5.4 0.6 V7.4 L0.6 4 Z" fill="#c9c9c9"/></svg>
<div class="r" style="left:861.2px;top:733.4px;width:490.3px;height:7.8px;background:#8b8b8b;border-radius:4px;"></div>
<svg class="r" style="left:1379.6px;top:733.4px;" width="6" height="8" viewBox="0 0 6 8" fill="none"><path d="M0.6 0.6 V7.4 L5.4 4 Z" fill="#b0b0b0"/></svg>
<svg class="r" style="left:1347.6px;top:726.4px;" width="9" height="10" viewBox="0 0 9 10" fill="none"><path d="M0.4 0.4 H8.6 L4.5 9.6 Z" fill="#8e8e8e"/></svg>
<div class="r" style="left:0px;top:748.5px;width:1408px;height:19.5px;background:#1c1c1c;"></div>
<span class="t" style="left:5.92px;top:753.03px;font-size:10.6px;color:#dcdcdc;transform:scaleX(0.9165);transform-origin:left center;">Ready</span>
<svg class="r" style="left:51px;top:753.4px;" width="11" height="10.6" viewBox="0 0 11 10.6" fill="none"><rect x="0.3" y="0.3" width="10.4" height="10" rx="1.4" fill="#b9b9b9"/><rect x="1.6" y="1.6" width="3.4" height="1.6" fill="#333"/><rect x="1.6" y="4" width="7.8" height="5" fill="#333"/><circle cx="6.4" cy="6.5" r="1.7" fill="#b9b9b9"/><circle cx="6.4" cy="6.5" r="0.8" fill="#333"/></svg>
<span class="t" style="left:75.38px;top:753.03px;font-size:10.6px;color:#dcdcdc;transform:scaleX(0.8905);transform-origin:left center;">Q2_Sales_Report.xisx</span>
<div class="r" style="left:1146px;top:749.6px;width:34px;height:18.4px;background:#444444;"></div>
<svg class="r" style="left:1157.6px;top:753px;" width="11.2" height="10.8" viewBox="0 0 11.2 10.8" fill="none"><rect x="0.6" y="0.6" width="10" height="9.6" stroke="#e6e6e6" stroke-width="1.1"/><path d="M4 0.8 V10 M7.4 0.8 V10 M0.8 3.8 H10.4 M0.8 7 H10.4" stroke="#e6e6e6" stroke-width="1"/></svg>
<svg class="r" style="left:1192px;top:753px;" width="12.4" height="10.8" viewBox="0 0 12.4 10.8" fill="none"><rect x="0.6" y="0.6" width="11.2" height="9.6" stroke="#d0d0d0" stroke-width="1.1"/><rect x="3" y="2.8" width="6.4" height="5.4" stroke="#d0d0d0" stroke-width="0.9"/><path d="M3.2 5.4 H9.2 M6.2 3 V8" stroke="#d0d0d0" stroke-width="0.8"/></svg>
<svg class="r" style="left:1225.8px;top:753px;" width="12.4" height="10.8" viewBox="0 0 12.4 10.8" fill="none"><rect x="0.6" y="0.6" width="11.2" height="9.6" stroke="#d0d0d0" stroke-width="1.1"/><path d="M3.4 0.8 V5.4 H7 V0.8" stroke="#d0d0d0" stroke-width="1"/></svg>
<div class="r" style="left:1254.8px;top:758.2px;width:6.2px;height:1.1px;background:#d0d0d0;"></div>
<div class="r" style="left:1267.4px;top:758.2px;width:85px;height:1px;background:#bdbdbd;"></div>
<div class="r" style="left:1308.2px;top:753.4px;width:3.8px;height:10.6px;background:#efefef;border-radius:1.2px;"></div>
<div class="r" style="left:1358.2px;top:758.2px;width:6.4px;height:1.1px;background:#d0d0d0;"></div>
<div class="r" style="left:1360.85px;top:755.55px;width:1.1px;height:6.4px;background:#d0d0d0;"></div>
<span class="t" style="left:1375.66px;top:753.60px;font-size:10.4px;color:#dcdcdc;transform:scaleX(0.9433);transform-origin:left center;">116%</span>
<span class="t ar" dir="rtl" style="left:603.2px;top:665.5px;width:200px;text-align:center;font-size:53px;font-weight:700;color:#000;-webkit-text-stroke:1.8px #000;opacity:0.12;line-height:1.2;height:70px;transform:scaleX(0.895);transform-origin:center center;">مستقل</span>
<span class="t" style="left:616.78px;top:725.16px;font-size:25.8px;color:#707070;font-weight:700;transform:scaleX(1.0836);transform-origin:left center;-webkit-text-stroke:0.5px #707070;">mostaql.com</span>
</body></html>
